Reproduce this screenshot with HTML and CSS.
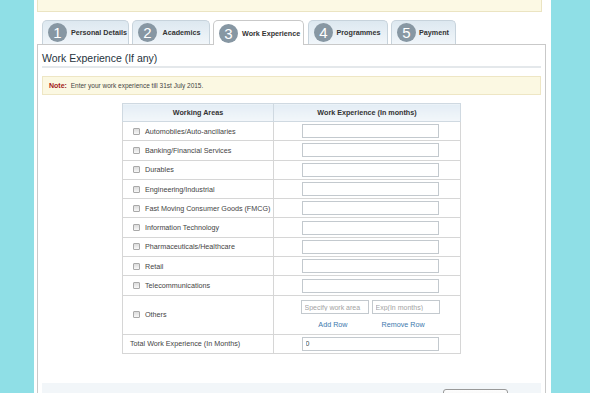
FILE: index.html
```html
<!DOCTYPE html>
<html lang="en">

<head>
	<meta charset="UTF-8">
	<title>Application Form | Work Experience</title>
	<link rel="stylesheet" href="styles.css">
</head>

<body>
	<div class="page">
		<div class="top-notice"></div>

		<!-- step tabs -->
		<ul class="tabs">
			<li class="tab tab-1"><span class="num">1</span><span class="label">Personal Details</span></li>
			<li class="tab tab-2"><span class="num">2</span><span class="label">Academics</span></li>
			<li class="tab tab-3 active"><span class="num">3</span><span class="label">Work Experience</span></li>
			<li class="tab tab-4"><span class="num">4</span><span class="label">Programmes</span></li>
			<li class="tab tab-5"><span class="num">5</span><span class="label">Payment</span></li>
		</ul>

		<div class="panel">
			<h2 class="section-title">Work Experience (If any)</h2>
			<div class="note"><b>Note:</b> Enter your work experience till 31st July 2015.</div>

			<table class="exp-table">
				<thead>
					<tr>
						<th class="col-area">Working Areas</th>
						<th class="col-exp">Work Experience (In months)</th>
					</tr>
				</thead>
				<tbody>
					<tr>
						<td><label><input type="checkbox" class="chk">Automobiles/Auto-ancillaries</label></td>
						<td class="center"><input type="text" class="field"></td>
					</tr>
					<tr>
						<td><label><input type="checkbox" class="chk">Banking/Financial Services</label></td>
						<td class="center"><input type="text" class="field"></td>
					</tr>
					<tr>
						<td><label><input type="checkbox" class="chk">Durables</label></td>
						<td class="center"><input type="text" class="field"></td>
					</tr>
					<tr>
						<td><label><input type="checkbox" class="chk">Engineering/Industrial</label></td>
						<td class="center"><input type="text" class="field"></td>
					</tr>
					<tr>
						<td><label><input type="checkbox" class="chk">Fast Moving Consumer Goods (FMCG)</label></td>
						<td class="center"><input type="text" class="field"></td>
					</tr>
					<tr>
						<td><label><input type="checkbox" class="chk">Information Technology</label></td>
						<td class="center"><input type="text" class="field"></td>
					</tr>
					<tr>
						<td><label><input type="checkbox" class="chk">Pharmaceuticals/Healthcare</label></td>
						<td class="center"><input type="text" class="field"></td>
					</tr>
					<tr>
						<td><label><input type="checkbox" class="chk">Retail</label></td>
						<td class="center"><input type="text" class="field"></td>
					</tr>
					<tr>
						<td><label><input type="checkbox" class="chk">Telecommunications</label></td>
						<td class="center"><input type="text" class="field"></td>
					</tr>
					<tr class="others">
						<td><label><input type="checkbox" class="chk">Others</label></td>
						<td class="center">
							<div class="other-fields">
								<input type="text" class="field small" placeholder="Specify work area">
								<input type="text" class="field small" placeholder="Exp(In months)">
							</div>
							<div class="row-links">
								<a href="#">Add Row</a>
								<a href="#">Remove Row</a>
							</div>
						</td>
					</tr>
					<tr>
						<td class="total">Total Work Experience (In Months)</td>
						<td class="center"><input type="text" class="field" value="0"></td>
					</tr>
				</tbody>
			</table>

			<div class="form-footer">
				<button class="btn">Save &amp; Continue</button>
			</div>
		</div>
	</div>
</body>

</html>
```

FILE: styles.css
```css
* {
	box-sizing: border-box;
}

html,
body {
	margin: 0;
	height: 100%;
}

body {
	background-color: #8fdfe6;
	font-family: "Liberation Sans", Arial, sans-serif;
	color: #333;
	overflow: hidden;
}

.page {
	width: 517px;
	height: 393px;
	margin-left: 34px;
	background-color: #fff;
	padding: 0 5px 0 3px;
}

.top-notice {
	width: 505px;
	height: 12px;
	background-color: #fcf9e4;
	border: 1px solid #ebe4c2;
	border-top: none;
}

/* tabs */
.tabs {
	list-style: none;
	margin: 8px 0 0 0;
	padding: 0 0 0 5px;
	display: flex;
	align-items: flex-end;
	position: relative;
	z-index: 1;
}

.tab {
	height: 24px;
	margin-right: 3px;
	display: flex;
	align-items: center;
	padding-left: 5px;
	border: 1px solid #c7d3dc;
	border-bottom: none;
	border-radius: 5px 5px 0 0;
	background: linear-gradient(#dde8f0, #f1f6fa);
	font-size: 7.2px;
	font-weight: bold;
	color: #333;
	white-space: nowrap;
}

.tab.active {
	background: #fff;
	height: 25px;
	margin-bottom: -1px;
	border-color: #c9c9c9;
}

.tab-1 { width: 87px; }
.tab-2 { width: 78px; }
.tab-3 { width: 91px; margin-right: 4px; }
.tab-4 { width: 80px; }
.tab-5 { width: 65px; }

.num {
	width: 19px;
	height: 19px;
	border-radius: 50%;
	background-color: #8797a3;
	color: #fff;
	font-size: 15px;
	font-weight: normal;
	display: flex;
	justify-content: center;
	align-items: center;
	flex-shrink: 0;
}

.label {
	flex: 1;
	text-align: center;
	padding-right: 3px;
}

.tab-1 .label,
.tab-3 .label {
	text-align: left;
	padding-left: 4px;
}

/* panel */
.panel {
	border: 1px solid #c9c9c9;
	border-bottom: none;
	height: 350px;
	padding: 0 4px;
}

.section-title {
	margin: 4px 0 0 0;
	height: 19px;
	line-height: 18px;
	font-size: 10.5px;
	font-weight: normal;
	color: #26333d;
	border-bottom: 2px solid #e4e8eb;
}

.note {
	margin-top: 8px;
	height: 19px;
	line-height: 17px;
	padding-left: 6px;
	background-color: #fbf8e2;
	border: 1px solid #eee6c4;
	font-size: 6.5px;
	color: #444;
}

.note b {
	color: #a31818;
	font-size: 7px;
	margin-right: 2px;
}

/* experience table */
.exp-table {
	margin: 8px auto 0 auto;
	width: 339px;
	border-collapse: collapse;
	font-size: 7.2px;
	color: #444;
}

.exp-table th,
.exp-table td {
	border: 1px solid #d6d6d6;
	height: 19.3px;
	padding: 0;
}

.exp-table th {
	height: 18px;
	background: linear-gradient(#e3edf5, #f3f7fa);
	border-color: #cfd9e1;
	font-weight: bold;
	color: #333;
}

.col-area {
	width: 151px;
}

.exp-table td label {
	display: flex;
	align-items: center;
	padding-left: 10px;
}

.chk {
	-webkit-appearance: none;
	appearance: none;
	width: 7px;
	height: 7px;
	margin: 0 5px 0 0;
	border: 1px solid #a9a9a9;
	border-radius: 1px;
	background: linear-gradient(#dcdcdc, #f7f7f7);
}

.center {
	text-align: center;
	padding-left: 6px !important;
}

.field {
	width: 137px;
	height: 14px;
	border: 1px solid #c3c9ce;
	padding: 0 3px;
	font-family: inherit;
	font-size: 7px;
	color: #444;
	display: block;
	margin: 0 auto;
}

.others td {
	height: 39px;
}

.other-fields {
	display: flex;
	justify-content: center;
	gap: 3px;
}

.field.small {
	width: 68px;
	margin: 0;
	color: #999;
}

.field.small::placeholder {
	color: #a3a3a3;
}

.row-links {
	display: flex;
	justify-content: center;
	gap: 34px;
	margin-top: 6px;
	padding-left: 3px;
}

.row-links a {
	color: #3c79ae;
	text-decoration: none;
}

.total {
	padding-left: 7px !important;
}

/* footer */
.form-footer {
	margin-top: 29px;
	height: 20px;
	background-color: #f2f6f9;
	padding: 4px 0 0 401px;
}

.btn {
	width: 65px;
	height: 18px;
	border: 1px solid #999;
	border-radius: 3px;
	background: linear-gradient(#fdfdfd, #e9e9e9);
	font-family: inherit;
	font-size: 7px;
	color: #333;
	padding: 0;
}
```
